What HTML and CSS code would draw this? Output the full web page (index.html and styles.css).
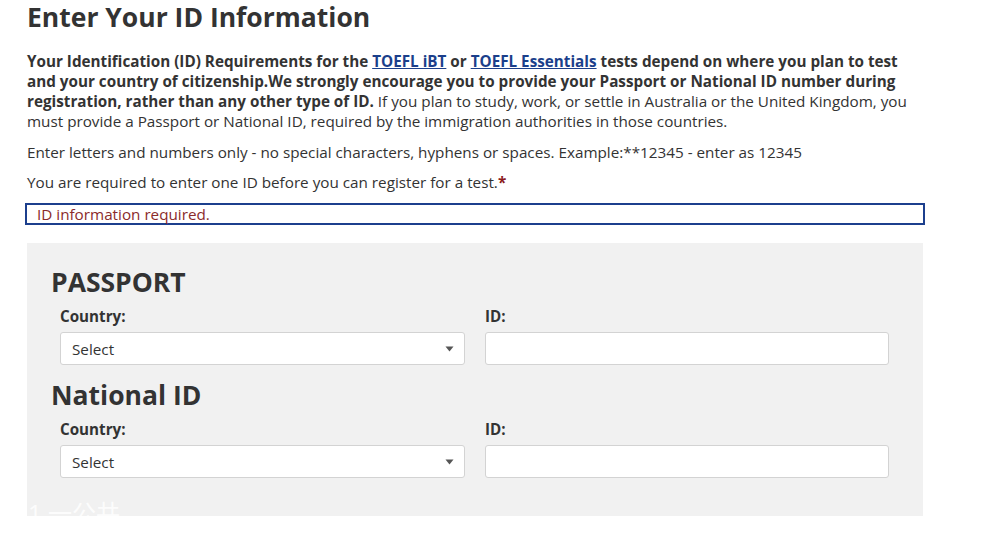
FILE: index.html
```html
<!doctype html>
<html lang="en">
<head>
    <meta charset="UTF-8">
    <meta name="viewport" content="width=device-width, initial-scale=1.0">
    <title>Enter Your ID Information</title>
    <link rel="stylesheet" href="styles.css">
</head>
<body>

<main class="page">
    <h1 class="title">Enter Your ID Information</h1>

    <p class="intro">
        <strong>Your Identification (ID) Requirements for the <a href="#">TOEFL iBT</a> or <a href="#">TOEFL Essentials</a> tests depend on where you plan to test and your country of citizenship.We strongly encourage you to provide your Passport or National ID number during registration, rather than any other type of ID.</strong>
        If you plan to study, work, or settle in Australia or the United Kingdom, you must provide a Passport or National ID, required by the immigration authorities in those countries.
    </p>

    <p class="note first">Enter letters and numbers only - no special characters, hyphens or spaces. Example:**12345 - enter as 12345</p>
    <p class="note">You are required to enter one ID before you can register for a test.<span class="req">*</span></p>

    <div class="error">ID information required.</div>

    <section class="id-panel">
        <div class="id-group">
            <h2 class="id-title">PASSPORT</h2>
            <div class="id-row">
                <div class="field">
                    <span class="field-label">Country:</span>
                    <div class="select">
                        <span>Select</span>
                        <svg width="9" height="6" viewBox="0 0 9 6"><path d="M0.5 0.5h8L4.5 5.5z" fill="#555"/></svg>
                    </div>
                </div>
                <div class="field">
                    <span class="field-label">ID:</span>
                    <div class="text-input"></div>
                </div>
            </div>
        </div>

        <div class="id-group">
            <h2 class="id-title">National ID</h2>
            <div class="id-row">
                <div class="field">
                    <span class="field-label">Country:</span>
                    <div class="select">
                        <span>Select</span>
                        <svg width="9" height="6" viewBox="0 0 9 6"><path d="M0.5 0.5h8L4.5 5.5z" fill="#555"/></svg>
                    </div>
                </div>
                <div class="field">
                    <span class="field-label">ID:</span>
                    <div class="text-input"></div>
                </div>
            </div>
        </div>

        <div class="panel-foot">1 一公共</div>
    </section>
</main>

</body>
</html>
```

FILE: styles.css
```css
body {
    margin: 0;
    background: #fff;
    color: #333;
    font-family: "Open Sans", "Noto Sans CJK SC", sans-serif;
}

.page {
    width: 885px;
    padding-left: 27px;
}

.title {
    margin: 0;
    font-size: 26.5px;
    line-height: 34px;
    font-weight: 700;
    color: #333;
}

.intro {
    margin: 17px 0 0;
    font-size: 15.25px;
    line-height: 20px;
}

.intro strong {
    font-weight: 700;
}

.intro a {
    color: #1b3f8b;
    text-decoration: underline;
}

.note {
    margin: 10px 0 0;
    font-size: 15.25px;
    line-height: 20px;
}

.note.first {
    margin-top: 11px;
}

.req {
    color: #8b1c1c;
    font-weight: 700;
}

.error {
    width: 876px;
    margin: 11px 0 0 -2px;
    padding: 0 10px;
    border: 2px solid #1c3f8d;
    font-size: 15.25px;
    line-height: 18px;
    color: #8b2b2b;
}

.id-panel {
    width: 896px;
    height: 273px;
    margin-top: 18px;
    padding: 22px 34px 0 24px;
    box-sizing: border-box;
    background: #f1f1f1;
    overflow: hidden;
}

.id-group + .id-group {
    margin-top: 13px;
}

.id-title {
    margin: 0 0 7px;
    font-size: 26.5px;
    line-height: 34px;
    font-weight: 700;
    color: #333;
}

.id-row {
    display: grid;
    grid-template-columns: 405px 404px;
    gap: 20px;
    padding-left: 9px;
}

.field {
    display: flex;
    flex-direction: column;
    gap: 6px;
}

.field-label {
    font-size: 15.2px;
    line-height: 20px;
    font-weight: 700;
}

.select,
.text-input {
    height: 33px;
    box-sizing: border-box;
    background: #fff;
    border: 1px solid #d3d3d3;
    border-radius: 3px;
}

.select {
    display: flex;
    align-items: center;
    justify-content: space-between;
    padding: 0 10px 0 11px;
    font-size: 15.25px;
}

.panel-foot {
    margin: 20px 0 0 -23px;
    font-size: 24px;
    line-height: 30px;
    color: rgba(255, 255, 255, 0.85);
}
```
